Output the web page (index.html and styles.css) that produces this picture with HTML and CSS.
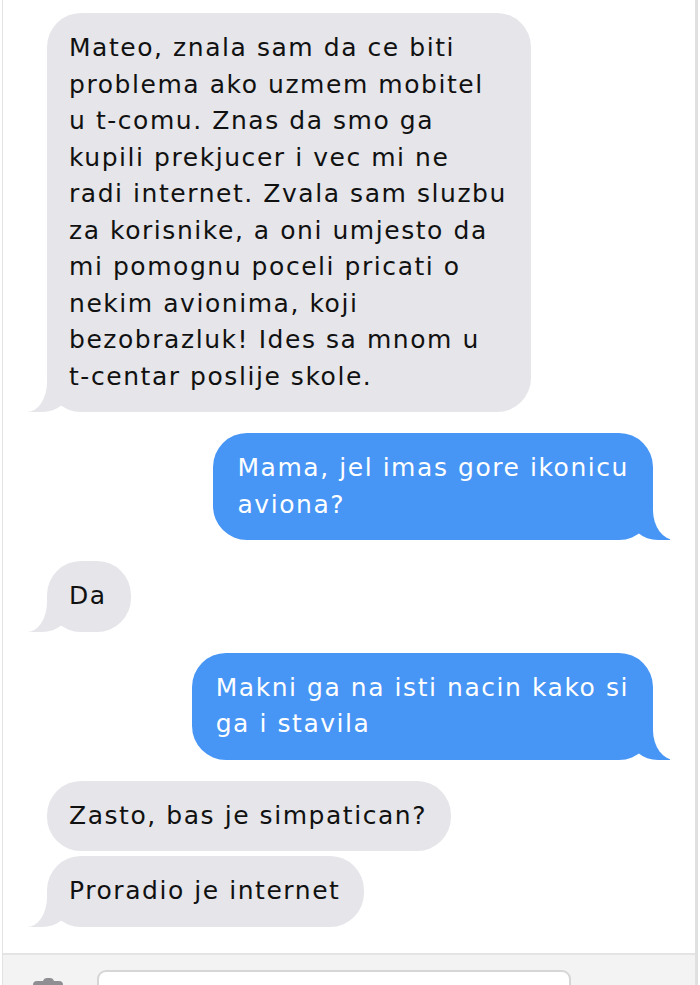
FILE: index.html
```html
<!DOCTYPE html>
<html lang="hr">
<head>
  <meta charset="UTF-8">
  <meta name="viewport" content="width=device-width, initial-scale=1">
  <title>Poruke</title>
  <link rel="stylesheet" href="styles.css">
</head>
<body>
  <div class="frame">
    <!-- Messages -->
    <div class="thread">
      <div class="msg them tail">
        Mateo, znala sam da ce biti<br>
        problema ako uzmem mobitel<br>
        u t-comu. Znas da smo ga<br>
        kupili prekjucer i vec mi ne<br>
        radi internet. Zvala sam sluzbu<br>
        za korisnike, a oni umjesto da<br>
        mi pomognu poceli pricati o<br>
        nekim avionima, koji<br>
        bezobrazluk! Ides sa mnom u<br>
        t-centar poslije skole.
      </div>
      <div class="msg me tail">
        Mama, jel imas gore ikonicu<br>
        aviona?
      </div>
      <div class="msg them tail">Da</div>
      <div class="msg me tail">
        Makni ga na isti nacin kako si<br>
        ga i stavila
      </div>
      <div class="msg them group">Zasto, bas je simpatican?</div>
      <div class="msg them tail">Proradio je internet</div>
    </div>

    <!-- Compose bar -->
    <div class="compose">
      <svg class="camera" width="30" height="24" viewBox="0 0 30 24">
        <path d="M10 3 Q11 0 14 0 H17 Q20 0 21 3 H26 Q30 3 30 7 V20 Q30 24 26 24 H4 Q0 24 0 20 V7 Q0 3 4 3 Z" fill="#8e8e93"/>
        <circle cx="15" cy="13" r="6" fill="#f3f3f3"/>
      </svg>
      <div class="input"></div>
    </div>
  </div>
</body>
</html>
```

FILE: styles.css
```css
* {
  box-sizing: border-box;
  margin: 0;
  padding: 0;
}

body {
  font-family: 'DejaVu Sans', Verdana, sans-serif;
  background: #fff;
  color: #111;
}

.frame {
  margin: 0 2px 0 2px;
  border-left: 1px solid #e2e2e2;
  border-right: 3px solid #e0e0e0;
  background: #fff;
  min-height: 1040px;
}

/* Messages */
.thread {
  display: flex;
  flex-direction: column;
  padding: 13px 42px 5px 44px;
}

.msg {
  position: relative;
  font-size: 25px;
  line-height: 36.5px;
  letter-spacing: 1.55px;
  padding: 17px 24px 17px 22px;
  border-radius: 34px;
  margin-bottom: 21px;
  white-space: nowrap;
}

.msg.group {
  margin-bottom: 5px;
}

.them {
  align-self: flex-start;
  background: #e5e5ea;
  color: #111;
}

.me {
  align-self: flex-end;
  background: #4795f5;
  color: #fff;
  padding-left: 24px;
}

/* Bubble tails */
.tail::before,
.tail::after {
  content: "";
  position: absolute;
  bottom: 0;
  height: 34px;
}

.them.tail::before {
  left: -23px;
  width: 46px;
  background: #e5e5ea;
  border-bottom-right-radius: 28px 24px;
}

.them.tail::after {
  left: -42px;
  width: 42px;
  background: #fff;
  border-bottom-right-radius: 20px 30px;
}

.me.tail::before {
  right: -17px;
  width: 40px;
  background: #4795f5;
  border-bottom-left-radius: 28px 24px;
}

.me.tail::after {
  right: -40px;
  width: 40px;
  background: #fff;
  border-bottom-left-radius: 22px 30px;
}

/* Compose bar */
.compose {
  border-top: 2px solid #e4e4e4;
  background: #f3f3f3;
  display: flex;
  align-items: flex-start;
  gap: 34px;
  padding: 15px 0 20px 30px;
  height: 80px;
}

.camera {
  margin-top: 8px;
}

.input {
  width: 474px;
  height: 40px;
  background: #fff;
  border: 2px solid #d6d6d6;
  border-radius: 9px;
}
```
